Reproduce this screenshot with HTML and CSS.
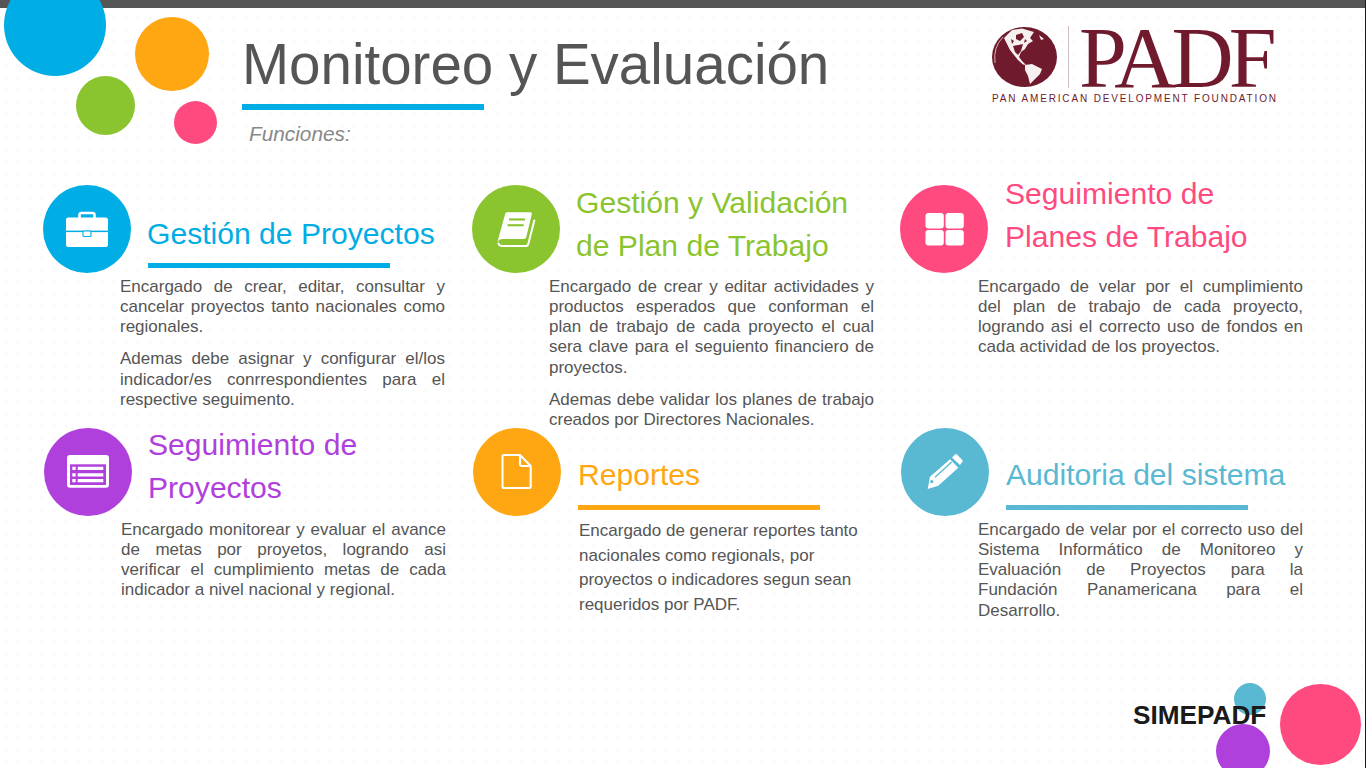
FILE: index.html
```html
<!DOCTYPE html>
<html lang="es">
<head>
    <meta charset="UTF-8">
    <title>Monitoreo y Evaluación - SIMEPADF</title>
    <link rel="stylesheet" href="styles.css">
</head>
<body>
    <div class="slide">
        <!-- Decorative bubbles -->
        <span class="bubble bubble-blue"></span>
        <span class="bubble bubble-orange"></span>
        <span class="bubble bubble-green"></span>
        <span class="bubble bubble-pink"></span>
        <span class="bubble bubble-teal"></span>
        <span class="bubble bubble-purple"></span>
        <span class="bubble bubble-pink-big"></span>

        <div class="top-bar"></div>

        <header class="header">
            <div class="title-block">
                <h1 class="title">Monitoreo y Evaluación</h1>
                <div class="title-line"></div>
                <p class="subtitle">Funciones:</p>
            </div>
            <div class="logo">
                <div class="logo-main">
                    <svg class="globe" viewBox="0 0 65 60" width="65" height="60">
                        <ellipse cx="32.5" cy="30" rx="32.5" ry="30" fill="#6f1a2d"/>
                        <path d="M3 36 Q1 20 11 10" fill="none" stroke="#e9d9dc" stroke-width="0.8"/>
                        <path d="M12 11 L20 3 L30 1.5 L42 5 L38 11 L41 14 L36 17 L33 22 L29 25 L27 30 L30 34 L34 38 L31 37.5 L26 33 L22 28 L18 23 L15 17 Z" fill="#f7f0f1"/>
                        <path d="M24 8 L30 6 L32 10 L28 14 L24 12 Z M19 12 L22 14 L20 17 Z M33 12 L35 14 L32 16 Z M21 19 L31 17 L29 24 L26 28 L23 25 Z" fill="#6f1a2d"/>
                        <path d="M33 38 L40 37 L50 42 L48 47 L43 52 L38 57 L36 49 L33 43 Z" fill="#f7f0f1"/>
                        <path d="M47 8 L52 12 L49 13 Z" fill="#f7f0f1"/>
                    </svg>
                    <span class="logo-sep"></span>
                    <span class="logo-name">PADF</span>
                </div>
                <div class="logo-text">PAN AMERICAN DEVELOPMENT FOUNDATION</div>
            </div>
        </header>

        <main>
            <section class="row">
                <article class="card card-blue">
                    <div class="card-head">
                        <div class="icon">
                            <svg viewBox="0 0 88 88" width="88" height="88">
                                <rect x="36.5" y="28" width="15" height="7" rx="2" fill="none" stroke="#fff" stroke-width="2.6"/>
                                <rect x="23" y="32.5" width="42" height="29.5" rx="2.5" fill="#fff"/>
                                <rect class="cut" x="23" y="45.6" width="42" height="1.5"/>
                                <rect x="40" y="46" width="8" height="5.5" rx="1" fill="#fff" stroke="#00ade4" stroke-width="1.1"/>
                            </svg>
                        </div>
                        <div class="head-text">
                            <h2 class="card-title single">Gestión de Proyectos</h2>
                            <div class="card-line"></div>
                        </div>
                    </div>
                    <div class="card-body">
                        <p>Encargado de crear, editar, consultar y cancelar proyectos tanto nacionales como regionales.</p>
                        <p>Ademas debe asignar y configurar el/los indicador/es conrrespondientes para el respective seguimento.</p>
                    </div>
                </article>

                <article class="card card-green">
                    <div class="card-head">
                        <div class="icon">
                            <svg viewBox="0 0 88 88" width="88" height="88">
                                <path d="M35 27.3 H58 q2.2 0 1.8 2 L54.3 52 q-.5 2-2.4 2 H31 q-4 0-5.7 3.4 L33 29.6 q.5-2.3 2-2.3z" fill="#fff"/>
                                <path d="M26.5 58.5 q.8 2.6 4 2.6 H53.5 q2.2 0 2.8-2.2 L62.3 35.5" fill="none" stroke="#fff" stroke-width="2" stroke-linecap="round"/>
                                <rect class="cut" x="37" y="33.4" width="16" height="2.1"/>
                                <rect class="cut" x="35.6" y="39.2" width="16" height="2.1"/>
                            </svg>
                        </div>
                        <div class="head-text">
                            <h2 class="card-title double">Gestión y Validación<br>de Plan de Trabajo</h2>
                            <div class="card-line"></div>
                        </div>
                    </div>
                    <div class="card-body">
                        <p>Encargado de crear y editar actividades y productos esperados que conforman el plan de trabajo de cada proyecto el cual sera clave para el seguiento financiero de proyectos.</p>
                        <p>Ademas debe validar los planes de trabajo creados por Directores Nacionales.</p>
                    </div>
                </article>

                <article class="card card-pink">
                    <div class="card-head">
                        <div class="icon">
                            <svg viewBox="0 0 88 88" width="88" height="88">
                                <rect x="25.5" y="28" width="18.3" height="15.5" rx="3" fill="#fff"/>
                                <rect x="45.5" y="28" width="18.3" height="15.5" rx="3" fill="#fff"/>
                                <rect x="25.5" y="45" width="18.3" height="15.5" rx="3" fill="#fff"/>
                                <rect x="45.5" y="45" width="18.3" height="15.5" rx="3" fill="#fff"/>
                            </svg>
                        </div>
                        <div class="head-text">
                            <h2 class="card-title raised">Seguimiento de<br>Planes de Trabajo</h2>
                            <div class="card-line"></div>
                        </div>
                    </div>
                    <div class="card-body shift">
                        <p>Encargado de velar por el cumplimiento del plan de trabajo de cada proyecto, logrando asi el correcto uso de fondos en cada actividad de los proyectos.</p>
                    </div>
                </article>
            </section>

            <section class="row row-low">
                <article class="card card-purple">
                    <div class="card-head">
                        <div class="icon">
                            <svg viewBox="0 0 88 88" width="88" height="88">
                                <rect x="23" y="27" width="42" height="32.7" rx="3" fill="#fff"/>
                                <rect class="cut" x="26" y="36.3" width="36" height="20.7"/>
                                <path d="M28.3 38.7 h3.4 v3.3 h-3.4z M33.7 38.7 h25.6 v3.3 h-25.6z M28.3 45.3 h3.4 v3.3 h-3.4z M33.7 45.3 h25.6 v3.3 h-25.6z M28.3 51 h3.4 v3.3 h-3.4z M33.7 51 h25.6 v3.3 h-25.6z" fill="#fff"/>
                            </svg>
                        </div>
                        <div class="head-text">
                            <h2 class="card-title double">Seguimiento de<br>Proyectos</h2>
                            <div class="card-line"></div>
                        </div>
                    </div>
                    <div class="card-body">
                        <p>Encargado monitorear y evaluar el avance de metas por proyetos, logrando asi verificar el cumplimiento metas de cada indicador a nivel nacional y regional.</p>
                    </div>
                </article>

                <article class="card card-orange">
                    <div class="card-head">
                        <div class="icon">
                            <svg viewBox="0 0 88 88" width="88" height="88">
                                <path d="M31 27 H47 L57.7 38 V58.5 q0 1.5-1.5 1.5 H31 q-1.5 0-1.5-1.5 V28.5 q0-1.5 1.5-1.5z" fill="none" stroke="#fff" stroke-width="2.1" stroke-linejoin="round"/>
                                <path d="M47 27 V36 q0 2 2 2 H57.7" fill="none" stroke="#fff" stroke-width="2.1" stroke-linejoin="round"/>
                            </svg>
                        </div>
                        <div class="head-text">
                            <h2 class="card-title single">Reportes</h2>
                            <div class="card-line"></div>
                        </div>
                    </div>
                    <div class="card-body body-loose">
                        <p>Encargado de generar reportes tanto nacionales como regionals, por proyectos o indicadores segun sean requeridos por PADF.</p>
                    </div>
                </article>

                <article class="card card-teal">
                    <div class="card-head">
                        <div class="icon">
                            <svg viewBox="0 0 88 88" width="88" height="88">
                                <path d="M49 31.3 L57.3 39.7 L37.3 57.7 L26.7 61 L29 48.7 Z" fill="#fff"/>
                                <path d="M54 26.5 q1-1 2 0 L61.3 32 q1 1 0 2 L59 37 L51 29.4 Z" fill="#fff"/>
                                <path d="M34 49.3 L50.7 34" class="cut-line"/>
                                <circle class="cut" cx="30.8" cy="53.6" r="1.6"/>
                            </svg>
                        </div>
                        <div class="head-text">
                            <h2 class="card-title single">Auditoria del sistema</h2>
                            <div class="card-line"></div>
                        </div>
                    </div>
                    <div class="card-body">
                        <p>Encargado de velar por el correcto uso del Sistema Informático de Monitoreo y Evaluación de Proyectos para la Fundación Panamericana para el Desarrollo.</p>
                    </div>
                </article>
            </section>
        </main>

        <div class="brand">SIMEPADF</div>
    </div>
</body>
</html>
```

FILE: styles.css
```css
* {
    margin: 0;
    padding: 0;
    box-sizing: border-box;
}

body {
    width: 1366px;
    height: 768px;
    overflow: hidden;
    font-family: 'Liberation Sans', Arial, sans-serif;
    background-color: #fff;
}

.slide {
    position: relative;
    width: 1366px;
    height: 768px;
    overflow: hidden;
    border-right: 1px solid #1a1a1a;
    background-image: radial-gradient(circle, #f7f7f7 0.8px, transparent 1px);
    background-size: 12px 12px;
}

.top-bar {
    height: 8px;
    background-color: #555;
}

/* Bubbles */
.bubble {
    position: absolute;
    border-radius: 50%;
}

.bubble-blue { left: 4px; top: -26px; width: 102px; height: 102px; background-color: #00ade4; }
.bubble-orange { left: 135px; top: 17px; width: 74px; height: 74px; background-color: #ffa613; }
.bubble-green { left: 76px; top: 76px; width: 59px; height: 59px; background-color: #8ac42e; }
.bubble-pink { left: 174px; top: 101px; width: 43px; height: 43px; background-color: #ff4a7f; }
.bubble-teal { left: 1234px; top: 683px; width: 32px; height: 32px; background-color: #59b8d2; }
.bubble-purple { left: 1216px; top: 724px; width: 54px; height: 54px; background-color: #b040dc; }
.bubble-pink-big { left: 1280px; top: 684px; width: 81px; height: 81px; background-color: #ff4a7f; }

/* Header */
.header {
    position: relative;
    display: flex;
    justify-content: space-between;
    height: 177px;
    padding: 0 86px 0 242px;
}

.title-block {
    padding-top: 25px;
}

.title {
    font-size: 56.5px;
    font-weight: normal;
    line-height: 64px;
    color: #555;
}

.title-line {
    width: 242px;
    height: 6px;
    margin-top: 7px;
    background-color: #00ade4;
}

.subtitle {
    margin: 12px 0 0 7px;
    font-size: 20.8px;
    font-style: italic;
    line-height: 24px;
    color: #888;
}

.logo {
    margin-top: 18px;
    width: 288px;
}

.logo-main {
    display: flex;
    align-items: center;
    height: 62px;
    padding-left: 1px;
}

.logo-sep {
    width: 1px;
    height: 62px;
    margin: 0 10px 0 11px;
    background-color: #cdbfc2;
}

.logo-name {
    margin-top: 2px;
    font-family: 'Liberation Serif', serif;
    font-size: 86px;
    line-height: 62px;
    letter-spacing: -4.8px;
    color: #6f1a2d;
}

.logo-text {
    margin: 5px 0 0 1px;
    font-size: 10px;
    line-height: 12px;
    letter-spacing: 1.85px;
    white-space: nowrap;
    color: #6f1a2d;
}

/* Cards */
.row {
    display: grid;
    grid-template-columns: 429px 428px 428px;
    height: 243px;
    padding-left: 43px;
}

.row-low {
    padding-left: 44px;
}

.card-blue { --accent: #00ade4; }
.card-green { --accent: #8ac42e; }
.card-pink { --accent: #ff4a7f; }
.card-purple { --accent: #b040dc; }
.card-orange { --accent: #ffa613; }
.card-teal { --accent: #59b8d2; }

.card-head {
    display: flex;
    gap: 17px;
    height: 88px;
}

.icon {
    flex: none;
    width: 88px;
    height: 88px;
    border-radius: 50%;
    background-color: var(--accent);
}

.icon svg {
    display: block;
}

.cut {
    fill: var(--accent);
}

.cut-line {
    fill: none;
    stroke: var(--accent);
    stroke-width: 1.3;
}

.head-text {
    display: flex;
    flex-direction: column;
    justify-content: flex-end;
    padding-bottom: 5px;
}

.row-low .head-text {
    padding-bottom: 6px;
}

.card-title {
    font-size: 30.1px;
    font-weight: normal;
    line-height: 43px;
    white-space: nowrap;
    color: var(--accent);
}

.card-blue .card-title,
.card-green .card-title,
.card-purple .card-title {
    margin-left: -1px;
}

.card-title.single {
    padding-bottom: 8px;
}

.row-low .card-title.single {
    padding-bottom: 9px;
}

.card-title.double {
    padding-bottom: 1px;
}

.card-title.raised {
    padding-bottom: 10px;
}

.card-line {
    width: 242px;
    height: 5px;
    background-color: var(--accent);
}

.card-body {
    width: 325px;
    margin: 3.6px 0 0 77px;
    font-size: 17px;
    line-height: 20.3px;
    color: #555;
    text-align: justify;
}

.card-body p + p {
    margin-top: 12px;
}

.card-body.shift {
    margin-left: 78px;
}

.card-body.body-loose {
    width: 290px;
    margin: 3px 0 0 106px;
    line-height: 24.5px;
    text-align: left;
}

.brand {
    position: absolute;
    left: 1133px;
    top: 698px;
    font-size: 26.2px;
    font-weight: bold;
    line-height: 34px;
    color: #1a1a1a;
}
```
